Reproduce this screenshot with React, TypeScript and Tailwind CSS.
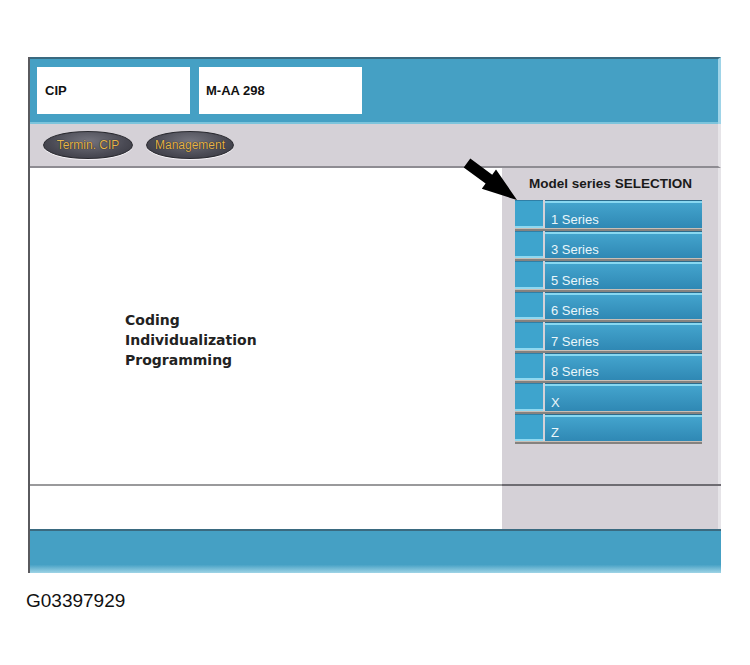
import React from "react";

const series = ["1 Series", "3 Series", "5 Series", "6 Series", "7 Series", "8 Series", "X", "Z"];

function PillButton({ label, width }: { label: string; width: string }) {
  return (
    <div
      className={`${width} h-[28px] rounded-[50%] border border-[#2a2a30] bg-[radial-gradient(ellipse_at_50%_35%,#74747e,#4a4a54_60%,#34343c)] flex items-center justify-center shadow-[0_1px_0_#f4f2f6]`}
    >
      <span className="text-[12px] leading-none text-[#e6b650] [text-shadow:0_0_1px_#000] font-['Liberation_Sans',Arial,sans-serif]">
        {label}
      </span>
    </div>
  );
}

function SeriesRow({ label }: { label: string }) {
  return (
    <div className="h-[30.5px] flex flex-col">
      <div className="flex-1 flex gap-[2px]">
        <div className="w-[28px] flex flex-col bg-[#3ea4cd] border-t border-[#2f7fa6]">
          <div className="flex-1" />
          <div className="h-[2px] bg-[#8fd8f0]" />
        </div>
        <div className="flex-1 flex flex-col border-t border-[#2b6b8c] bg-[linear-gradient(#45a6cf,#2f88b4)]">
          <div className="h-[2px] bg-[#88d8f1]" />
          <div className="flex-1 flex items-center pl-[6px] pt-[8px]">
            <span className="text-[13px] leading-none text-[#eaf6fa] font-['Liberation_Sans',Arial,sans-serif]">
              {label}
            </span>
          </div>
        </div>
      </div>
      <div className="h-[3px] flex flex-col">
        <div className="h-[1px] bg-[#c9bfb6]" />
        <div className="flex-1 bg-[#85827f]" />
      </div>
    </div>
  );
}

export default function App() {
  return (
    <div className="w-[750px] h-[665px] bg-white relative overflow-hidden font-['Liberation_Sans',Arial,sans-serif]">
      <div className="pt-[57px] pl-[28px]">
        <div className="w-[693px] border-l-2 border-[#5a5a5e] flex flex-col">
          {/* Title band */}
          <div className="h-[67px] bg-[#45a0c4] border-t-2 border-[#3a6a80] border-r-[3px] border-r-[#9fd4e8] flex flex-col">
            <div className="flex gap-[9px] pl-[7px] pt-[8px]">
              <div className="w-[153px] h-[47px] bg-white flex items-center pl-[8px]">
                <span className="text-[13px] font-bold text-[#111]">CIP</span>
              </div>
              <div className="w-[163px] h-[47px] bg-white flex items-center pl-[7px]">
                <span className="text-[13px] font-bold text-[#111]">M-AA 298</span>
              </div>
            </div>
            <div className="mt-auto h-[2px] bg-[#7cc4dc]" />
          </div>

          {/* Toolbar */}
          <div className="h-[44px] bg-[#d5d1d7] border-b-2 border-[#8e8c92] border-r-[3px] border-r-[#e6e4e8] flex items-start gap-[13px] pl-[13px] pt-[7px]">
            <PillButton label="Termin. CIP" width="w-[90px]" />
            <PillButton label="Management" width="w-[88px]" />
          </div>

          {/* Work area */}
          <div className="h-[316px] flex">
            <div className="flex-1 bg-white pl-[95px] pt-[142px]">
              <div className="text-[14px] leading-[20px] font-bold text-[#222] font-['DejaVu_Sans',Verdana,sans-serif]">
                <div>Coding</div>
                <div>Individualization</div>
                <div>Programming</div>
              </div>
            </div>
            <div className="w-[219px] bg-[#d5d1d7] border-r-[3px] border-r-[#e6e4e8] flex flex-col pl-[13px] pr-[16px]">
              <div className="h-[32px] flex items-center justify-center pl-[4px]">
                <span className="text-[13.5px] font-bold text-[#1a1a1a]">Model series SELECTION</span>
              </div>
              <div className="flex flex-col">
                {series.map((s) => (
                  <SeriesRow key={s} label={s} />
                ))}
              </div>
            </div>
          </div>

          {/* Divider */}
          <div className="h-[2px] flex">
            <div className="flex-1 bg-[#9a9a9c]" />
            <div className="w-[219px] bg-[#6e6c72]" />
          </div>

          {/* Status row */}
          <div className="h-[43px] flex">
            <div className="flex-1 bg-white" />
            <div className="w-[219px] bg-[#d5d1d7] border-r-[3px] border-r-[#e6e4e8]" />
          </div>

          {/* Footer band */}
          <div className="h-[44px] border-t-2 border-[#3a6a80] bg-[linear-gradient(#45a0c4,#45a0c4_80%,#9fd4e6)]" />
        </div>
      </div>

      <div className="pl-[26px] pt-[18px] text-[19px] leading-[20px] text-[#111]">G03397929</div>

      {/* Pointer arrow over the selection list */}
      <svg className="absolute left-[460px] top-[155px]" width="64" height="50" viewBox="0 0 64 50">
        <polygon points="10.3,3.6 32.2,19.8 36,14.6 57,45 21.8,33.8 25.6,28.6 3.7,12.4" fill="#000" />
      </svg>
    </div>
  );
}
